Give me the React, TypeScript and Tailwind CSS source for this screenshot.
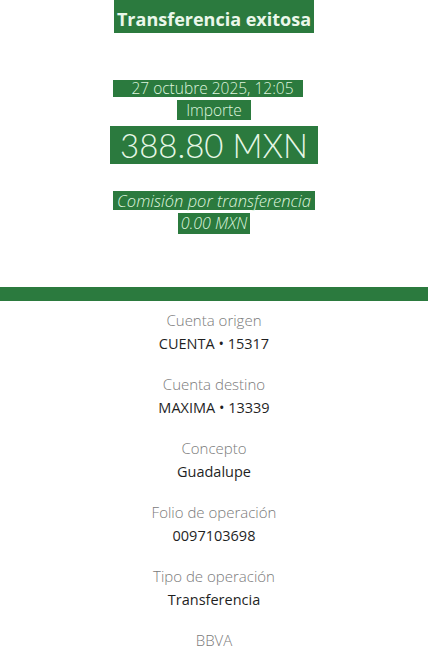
import React from "react";

const G = "bg-[#2b7a3e]";

function Row({ label, value }: { label: string; value?: string }) {
  return (
    <div className="flex flex-col items-center h-[64px]">
      <div className="text-[15px] leading-[24px] text-[#7a7a7a] font-light">{label}</div>
      {value && <div className="text-[14.5px] leading-[24px] text-[#1f1f1f]">{value}</div>}
    </div>
  );
}

export default function App() {
  return (
    <div className="w-[428px] h-[661px] bg-white overflow-hidden" style={{ fontFamily: "'Open Sans', sans-serif" }}>
      <div className="flex flex-col items-center h-[287px]">
        <span className={`${G} text-[#eaf7ea] text-[18px] font-bold leading-[24px] pt-[7px] pb-[2px] px-[3px]`}>Transferencia exitosa</span>
        <span className={`${G} mt-[47px] mr-[12px] text-[#dff5df] text-[15.5px] font-light leading-[17px] pl-[18px] pr-[9px]`}>27 octubre 2025, 12:05</span>
        <span className={`${G} mt-[3px] text-[#dff5df] text-[15.5px] font-light leading-[20px] px-[9px]`}>Importe</span>
        <span className={`${G} mt-[6px] text-[#e6f7e6] text-[33px] font-light leading-[38px] px-[10px]`} style={{ fontFamily: "Lato, sans-serif" }}>388.80 MXN</span>
        <span className={`${G} mt-[27px] text-[#dff5df] text-[16.5px] font-light italic leading-[19px] px-[4px]`}>Comisión por transferencia</span>
        <span className={`${G} mt-[3px] text-[#dff5df] text-[16px] font-light italic leading-[21px] px-[3px]`}>0.00 MXN</span>
      </div>
      <div className={`${G} h-[14px] w-full`} />
      <div className="flex flex-col pt-[7px]">
        <Row label="Cuenta origen" value="CUENTA • 15317" />
        <Row label="Cuenta destino" value="MAXIMA • 13339" />
        <Row label="Concepto" value="Guadalupe" />
        <Row label="Folio de operación" value="0097103698" />
        <Row label="Tipo de operación" value="Transferencia" />
        <Row label="BBVA" />
      </div>
    </div>
  );
}
